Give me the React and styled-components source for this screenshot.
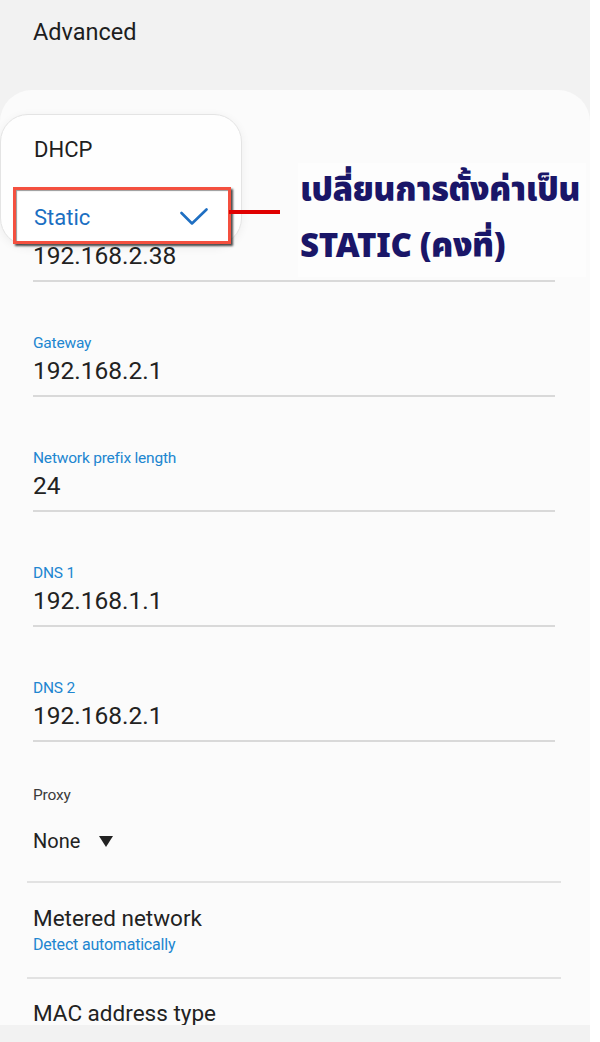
import React from "react";
import styled, { createGlobalStyle } from "styled-components";

const Global = createGlobalStyle`
  html, body { margin: 0; padding: 0; background: #ffffff; }
  body { font-family: Roboto, "Noto Sans", "Liberation Sans", sans-serif; }
  * { box-sizing: border-box; }
`;

const Screen = styled.div`
  width: 590px;
  height: 1042px;
  background: #f2f2f2;
  display: flex;
  flex-direction: column;
  overflow: hidden;
`;

const Header = styled.div`
  height: 90px;
  flex: none;
  padding: 18px 0 0 33px;
  font-size: 23.5px;
  line-height: 28px;
  color: #1e1e1e;
`;

const Card = styled.div`
  position: relative;
  flex: none;
  height: 935px;
  background: #fbfbfb;
  border-radius: 32px 32px 0 0;
  overflow: hidden;
  display: flex;
  flex-direction: column;
  padding-top: 128px;
`;

const BottomBar = styled.div`
  flex: 1;
  background: #f2f2f2;
`;

const Field = styled.div`
  margin: ${(p) => (p.$first ? "0" : "51px")} 35px 0 33px;
  display: flex;
  flex-direction: column;
  border-bottom: 2px solid #d9d9d9;
  padding-bottom: 8px;
`;

const Label = styled.div`
  font-size: 15.5px;
  line-height: 20px;
  color: ${(p) => (p.$muted ? "#3c3c3c" : "#2186d0")};
  letter-spacing: -0.2px;
`;

const Value = styled.div`
  margin-top: 2px;
  font-size: 24.5px;
  line-height: 32px;
  color: #222;
`;

const ProxyBlock = styled.div`
  margin: 43px 29px 0 27px;
  padding: 0 0 24px 6px;
  border-bottom: 2px solid #e2e2e2;
  display: flex;
  flex-direction: column;
`;

const Select = styled.div`
  margin-top: 20px;
  display: flex;
  align-items: center;
  gap: 19px;
  font-size: 20px;
  line-height: 32px;
  color: #222;
`;

const Caret = styled.span`
  width: 0;
  height: 0;
  border-left: 7px solid transparent;
  border-right: 7px solid transparent;
  border-top: 11px solid #222;
`;

const ListItem = styled.div`
  margin: ${(p) => p.$mt}px 29px 0 27px;
  padding: 0 0 ${(p) => p.$pb}px 6px;
  border-bottom: ${(p) => (p.$divider ? "2px solid #e2e2e2" : "none")};
  display: flex;
  flex-direction: column;
`;

const Title = styled.div`
  font-size: 22.5px;
  line-height: 30px;
  color: #222;
`;

const Sub = styled.div`
  margin-top: 2px;
  font-size: 16px;
  line-height: 20px;
  color: #2186d0;
  letter-spacing: -0.2px;
`;

const Popup = styled.div`
  position: absolute;
  left: 0;
  top: 24px;
  width: 242px;
  height: 132px;
  background: #fefefe;
  border-radius: 28px;
  border: 1px solid #e4e4e4;
  box-shadow: 0 2px 10px rgba(0, 0, 0, 0.06);
  padding: 6px 0 0 0;
  display: flex;
  flex-direction: column;
`;

const Option = styled.div`
  height: 56px;
  display: flex;
  align-items: center;
  padding-left: 33px;
  font-size: 22px;
  color: #1e1e1e;
`;

const Selected = styled.div`
  margin: 10px 0 0 12px;
  width: 218px;
  height: 57px;
  background: #fff;
  border: 3px solid #f4503f;
  box-shadow: 2px 2px 2px rgba(0, 0, 0, 0.7), inset 1px 1px 1px rgba(0, 0, 0, 0.4);
  display: flex;
  align-items: center;
  justify-content: space-between;
  padding: 3px 20px 0 18px;
  font-size: 22px;
  color: #1b6fc2;
`;

const Connector = styled.div`
  position: absolute;
  left: 229px;
  top: 120px;
  width: 51px;
  height: 4px;
  background: #e00000;
`;

const Note = styled.div`
  position: absolute;
  left: 298px;
  top: 73px;
  padding: 0 6px 2px 2px;
  background: #fdfdfd;
  font-family: "Noto Sans Thai", "Noto Sans Thai UI", Loma, Garuda, Kinnari, "Tlwg Typo", "Noto Sans", sans-serif;
  font-weight: 900;
  font-size: 33px;
  line-height: 56px;
  letter-spacing: -0.3px;
  color: #1a1668;
  white-space: nowrap;
`;

function Check() {
  return (
    <svg width="28" height="18" viewBox="0 0 28 18" fill="none">
      <polyline points="1.5,5 12,15.5 26.5,1.5" stroke="#1f6fc2" strokeWidth="2.6" strokeLinecap="round" strokeLinejoin="round" />
    </svg>
  );
}

const fields = [
  { label: "IP address", value: "192.168.2.38" },
  { label: "Gateway", value: "192.168.2.1" },
  { label: "Network prefix length", value: "24" },
  { label: "DNS 1", value: "192.168.1.1" },
  { label: "DNS 2", value: "192.168.2.1" },
];

export default function App() {
  return (
    <>
      <Global />
      <Screen>
        <Header>Advanced</Header>
        <Card>
          {fields.map((f, i) => (
            <Field key={f.label} $first={i === 0}>
              <Label>{f.label}</Label>
              <Value>{f.value}</Value>
            </Field>
          ))}
          <ProxyBlock>
            <Label $muted>Proxy</Label>
            <Select>
              None <Caret />
            </Select>
          </ProxyBlock>
          <ListItem $mt={20} $pb={22} $divider>
            <Title>Metered network</Title>
            <Sub>Detect automatically</Sub>
          </ListItem>
          <ListItem $mt={19} $pb={0}>
            <Title>MAC address type</Title>
          </ListItem>

          <Popup>
            <Option>DHCP</Option>
            <Selected>
              <span>Static</span>
              <Check />
            </Selected>
          </Popup>
          <Connector />
          <Note>
            เปลี่ยนการตั้งค่าเป็น
            <br />
            STATIC (คงที่)
          </Note>
        </Card>
        <BottomBar />
      </Screen>
    </>
  );
}
